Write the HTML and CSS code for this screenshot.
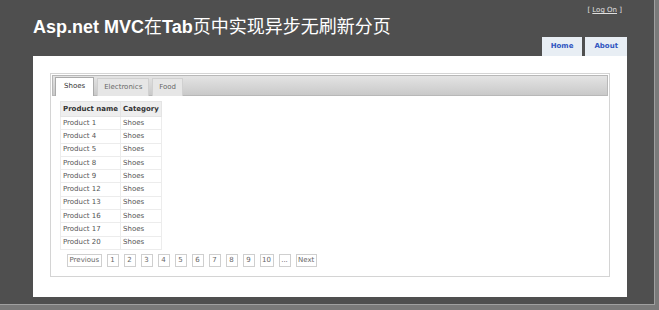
FILE: index.html
```html
<!DOCTYPE html>
<html lang="zh-CN">
<head>
    <meta charset="UTF-8">
    <title>Asp.net MVC在Tab页中实现异步无刷新分页</title>
    <link rel="stylesheet" href="styles.css">
</head>
<body>
    <div class="frame">
        <div class="page">
            <!-- Header -->
            <div class="header">
                <h1 class="title">Asp.net MVC<span class="cjk">在</span>Tab<span class="cjk">页中实现异步无刷新分页</span></h1>
                <div class="header-right">
                    <div class="logon">[ <a href="#">Log On</a> ]</div>
                    <ul class="menu">
                        <li><a href="#">Home</a></li>
                        <li><a href="#">About</a></li>
                    </ul>
                </div>
            </div>

            <!-- Main -->
            <div class="main">
                <div class="tabs">
                    <ul class="tab-nav">
                        <li class="active"><a href="#">Shoes</a></li>
                        <li><a href="#">Electronics</a></li>
                        <li><a href="#">Food</a></li>
                    </ul>
                    <div class="tab-panel">
                        <table class="grid">
                            <tr><th class="col-name">Product name</th><th class="col-cat">Category</th></tr>
                            <tr><td>Product 1</td><td>Shoes</td></tr>
                            <tr><td>Product 4</td><td>Shoes</td></tr>
                            <tr><td>Product 5</td><td>Shoes</td></tr>
                            <tr><td>Product 8</td><td>Shoes</td></tr>
                            <tr><td>Product 9</td><td>Shoes</td></tr>
                            <tr><td>Product 12</td><td>Shoes</td></tr>
                            <tr><td>Product 13</td><td>Shoes</td></tr>
                            <tr><td>Product 16</td><td>Shoes</td></tr>
                            <tr><td>Product 17</td><td>Shoes</td></tr>
                            <tr><td>Product 20</td><td>Shoes</td></tr>
                        </table>

                        <div class="pager">
                            <a href="#">Previous</a>
                            <a href="#">1</a>
                            <a href="#">2</a>
                            <a href="#">3</a>
                            <a href="#">4</a>
                            <a href="#">5</a>
                            <a href="#">6</a>
                            <a href="#">7</a>
                            <a href="#">8</a>
                            <a href="#">9</a>
                            <a href="#">10</a>
                            <a href="#">...</a>
                            <a href="#">Next</a>
                        </div>
                    </div>
                </div>
            </div>
        </div>
    </div>
</body>
</html>
```

FILE: styles.css
```css
body {
    margin: 0;
    background-color: #7a7a7a;
    font-family: "DejaVu Sans", Verdana, sans-serif;
}
.frame {
    width: 654px;
    height: 304px;
    background-color: #4f4f4f;
    border-right: 1px solid #a0a0a0;
    border-bottom: 1px solid #a0a0a0;
    overflow: hidden;
}
.page {
    width: 594px;
    margin-left: 33px;
}

/* header */
.header {
    display: flex;
    justify-content: space-between;
    height: 56px;
}
.title {
    margin: 0;
    padding-top: 15px;
    font-family: "Liberation Sans", Arial, "Noto Sans CJK SC", sans-serif;
    font-size: 18px;
    line-height: 20px;
    font-weight: bold;
    color: #fff;
}
.title .cjk {
    font-family: "Noto Sans CJK SC", sans-serif;
    font-weight: normal;
}
.header-right {
    display: flex;
    flex-direction: column;
    justify-content: space-between;
    align-items: flex-end;
}
.logon {
    margin-top: 6px;
    margin-right: 5px;
    font-size: 7px;
    color: #e0e0e0;
}
.logon a {
    color: #e0e0e0;
}
.menu {
    display: flex;
    gap: 3px;
    margin: 0;
    padding: 0;
    list-style: none;
}
.menu a {
    display: block;
    height: 19px;
    line-height: 19px;
    padding: 0 9px;
    background-color: #e8eef4;
    color: #2f55c0;
    font-size: 7px;
    font-weight: bold;
    text-decoration: none;
}

/* main panel */
.main {
    box-sizing: border-box;
    height: 241px;
    padding: 17px;
    background-color: #fff;
}
.tabs {
    box-sizing: border-box;
    height: 204px;
    padding: 1px;
    border: 1px solid #d4d4d4;
}
.tab-nav {
    display: flex;
    align-items: flex-end;
    gap: 3px;
    box-sizing: border-box;
    height: 21px;
    margin: 0;
    padding: 0 2px;
    list-style: none;
    border: 1px solid #b8b8b8;
    background: linear-gradient(#e4e4e4, #c9c9c9);
}
.tab-nav li {
    border: 1px solid #d0d0d0;
    border-bottom: 0;
    background-color: #e6e6e6;
    margin-bottom: -1px;
}
.tab-nav a {
    display: block;
    height: 17px;
    line-height: 16px;
    padding: 0 6px;
    font-size: 7px;
    color: #666;
    text-decoration: none;
}
.tab-nav li.active {
    background-color: #fff;
    border-color: #aaa;
}
.tab-nav li.active a {
    height: 18px;
    padding: 0 8px;
    color: #333;
}
.tab-panel {
    padding: 5px 8px;
}

/* table */
.grid {
    border-collapse: collapse;
    font-size: 7px;
    color: #555;
}
.grid th {
    height: 14px;
    padding: 0 2px;
    text-align: left;
    font-weight: bold;
    white-space: nowrap;
    color: #333;
    background-color: #eeeeee;
    border: 1px solid #e4e4e4;
}
.grid td {
    height: 12.3px;
    line-height: 11px;
    padding: 0 2px;
    white-space: nowrap;
    border: 1px solid #ececec;
}
.grid .col-name {
    width: 54px;
}
.grid .col-cat {
    width: 33px;
}

/* pager */
.pager {
    display: flex;
    gap: 5px;
    margin-top: 4px;
    padding-left: 7px;
}
.pager a {
    box-sizing: border-box;
    min-width: 12px;
    height: 13px;
    line-height: 11px;
    padding: 0 1.5px;
    border: 1px solid #cfcfcf;
    font-size: 7px;
    color: #666;
    text-align: center;
    text-decoration: none;
}
```
